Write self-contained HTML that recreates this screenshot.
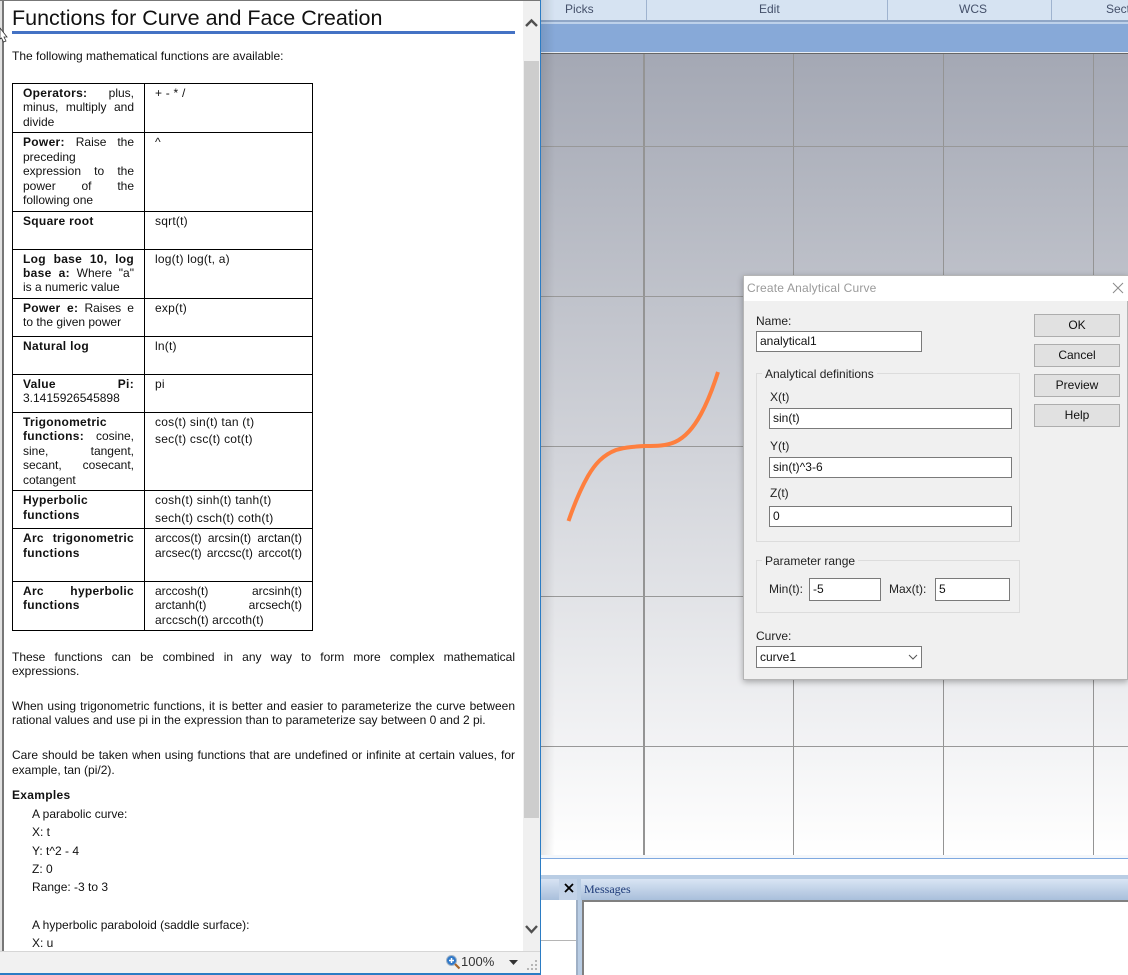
<!DOCTYPE html>
<html><head><meta charset="utf-8">
<style>
html,body{margin:0;padding:0;width:1128px;height:975px;overflow:hidden;background:#fff}
body{position:relative;font:12px/14px "Liberation Sans",sans-serif;color:#111}
div{position:absolute;box-sizing:border-box}
b{letter-spacing:.3px}
.t{white-space:nowrap;height:14px}
.j{white-space:normal;text-align:justify;text-align-last:justify;height:14px;overflow:hidden}
.c{left:23px;width:111px}
.r{left:155px;width:147px}
.r.t{letter-spacing:.22px}
.h{background:#000}
.in{background:#fff;border:1px solid #7a7a7a;padding:0 3px;line-height:19px;color:#111}
.btn{left:1034px;width:86px;height:23px;background:#e1e1e1;border:1px solid #adadad;text-align:center;line-height:21px}
.gb{border:1px solid #dcdcdc}
.gl{background:#f0f0f0;padding:0 3px;color:#222}
.gv{background:#949494}
.gh{left:541px;width:587px;height:1px;background:#989898}
</style></head><body>

<!-- application background -->
<div style="left:540px;top:0;width:588px;height:20px;background:#d6e3f2;color:#44506a;text-align:center">
  <div class="t" style="left:25px;top:2px">Picks</div>
  <div class="t" style="left:219px;top:2px">Edit</div>
  <div class="t" style="left:419px;top:2px">WCS</div>
  <div class="t" style="left:566px;top:2px">Sect</div>
  <div style="left:106px;top:0;width:1px;height:20px;background:#9fb3cf"></div>
  <div style="left:347px;top:0;width:1px;height:20px;background:#9fb3cf"></div>
  <div style="left:511px;top:0;width:1px;height:20px;background:#9fb3cf"></div>
</div>
<div style="left:540px;top:20px;width:588px;height:2px;background:#8fa6c6"></div>
<div style="left:540px;top:22px;width:588px;height:2px;background:#bdd1ea"></div>
<div style="left:540px;top:24px;width:588px;height:28px;background:#87a9d8"></div>
<div style="left:540px;top:52px;width:588px;height:1px;background:#e8eef6"></div>
<div style="left:540px;top:53px;width:588px;height:1px;background:#666"></div>

<!-- viewport -->
<div style="left:540px;top:54px;width:588px;height:801px;background:linear-gradient(#a4a8b4,#ffffff)"></div>
<div class="gv" style="left:643px;top:54px;width:2px;height:801px"></div>
<div class="gv" style="left:793px;top:54px;width:1px;height:801px"></div>
<div class="gv" style="left:943px;top:54px;width:1px;height:801px"></div>
<div class="gv" style="left:1093px;top:54px;width:1px;height:801px"></div>
<div class="gh" style="top:146px"></div>
<div class="gh" style="top:296px"></div>
<div class="gh" style="top:446px"></div>
<div class="gh" style="top:596px"></div>
<div class="gh" style="top:746px"></div>
<svg style="position:absolute;left:540px;top:340px" width="200" height="200" viewBox="540 340 200 200">
<path d="M568.500 521C574 505 580 490 588 476C595 464 603 455 616 450C626 447 636 446.500 645 446C656 446 666 446 675 442C686 437 694 427 701 414C708 401 713 388 718 372" fill="none" stroke="#fe7f3e" stroke-width="4"/>
</svg>
<div style="left:541px;top:0;width:14px;height:855px;background:linear-gradient(90deg,rgba(0,0,0,.10),rgba(0,0,0,0))"></div>

<!-- bottom panels -->
<div style="left:540px;top:855px;width:588px;height:3px;background:#f4f7fb"></div>
<div style="left:540px;top:858px;width:588px;height:1px;background:#7fa9e0"></div>
<div style="left:540px;top:859px;width:588px;height:16px;background:#fff"></div>
<div style="left:540px;top:875px;width:588px;height:100px;background:#b9cde4"></div>
<div style="left:541px;top:879px;width:36px;height:21px;background:linear-gradient(#d7e3f3,#a9bfdb)"></div>
<div style="left:559px;top:879px;width:18px;height:21px;background:#c3d3e8"></div>
<svg style="position:absolute;left:564px;top:883px" width="10" height="10"><path d="M1 1L9 9M9 1L1 9" stroke="#000" stroke-width="1.800"/></svg>
<div style="left:541px;top:900px;width:35px;height:75px;background:#fff"></div>
<div style="left:541px;top:940px;width:35px;height:1px;background:#b5b5b5"></div>
<div style="left:576px;top:900px;width:2px;height:75px;background:#9fb0c6"></div>
<div style="left:581px;top:879px;width:547px;height:21px;background:linear-gradient(#d9e5f4,#a9bfdb)"></div>
<div class="t" style="left:584px;top:882px;font:12px/14px 'Liberation Serif',serif;color:#1d3a78">Messages</div>
<div style="left:582px;top:900px;width:546px;height:75px;background:#fff;border-left:2px solid #808080;border-top:2px solid #808080"></div>

<!-- help window -->
<div style="left:0;top:0;width:541px;height:975px;background:#fff"></div>
<div style="left:0;top:0;width:2px;height:951px;background:#e2e2e2"></div>
<div style="left:2px;top:0;width:2px;height:951px;background:#777"></div>
<div style="left:0;top:0;width:541px;height:1px;background:#777"></div>
<div style="left:540px;top:0;width:1px;height:974px;background:#2b7cc4"></div>
<div style="left:0;top:973px;width:541px;height:2px;background:#2b7cc4"></div>
<!-- scrollbar -->
<div style="left:523px;top:1px;width:17px;height:950px;background:#f0f0f0"></div>
<div style="left:524px;top:61px;width:15px;height:757px;background:#cdcdcd"></div>
<svg style="position:absolute;left:524px;top:14px" width="15" height="16"><path d="M2 12L7.500 6.500L13 12" fill="none" stroke="#505050" stroke-width="2.400"/></svg>
<svg style="position:absolute;left:524px;top:923px" width="15" height="14"><path d="M2 3L7.500 9L13 3" fill="none" stroke="#505050" stroke-width="2.400"/></svg>
<!-- status -->
<div style="left:0;top:951px;width:540px;height:22px;background:#f1f1f1;border-top:1px solid #d6d6d6"></div>
<svg style="position:absolute;left:445px;top:954px" width="16" height="16"><circle cx="6.500" cy="6.500" r="5" fill="#2f78c8" stroke="#9fb2c6"/><path d="M4 6.500H9M6.500 4V9" stroke="#fff" stroke-width="1.500"/><path d="M10 10L14.500 14.500" stroke="#a8672c" stroke-width="2.200"/></svg>
<div class="t" style="left:461px;top:955px;font-size:13px;color:#333">100%</div>
<svg style="position:absolute;left:509px;top:960px" width="10" height="6"><path d="M0 0H9L4.500 5Z" fill="#333"/></svg>
<svg style="position:absolute;left:527px;top:960px" width="12" height="12" fill="#b5b5b5"><rect x="8" y="0" width="2" height="2"/><rect x="4" y="4" width="2" height="2"/><rect x="8" y="4" width="2" height="2"/><rect x="0" y="8" width="2" height="2"/><rect x="4" y="8" width="2" height="2"/><rect x="8" y="8" width="2" height="2"/></svg>
<!-- cursor -->
<svg style="position:absolute;left:0;top:26px" width="9" height="20"><path d="M0 2L7 11H4L6 15L3.500 16L1.500 12L0 13Z" fill="#fff" stroke="#333" stroke-width=".8"/></svg>

<!-- title -->
<div class="t" style="left:12px;top:5px;height:26px;font-size:21.500px;line-height:26px;color:#111">Functions for Curve and Face Creation</div>
<div style="left:12px;top:31px;width:503px;height:3px;background:#4472c4"></div>
<div class="t" style="left:12px;top:49px">The following mathematical functions are available:</div>

<!-- table lines -->
<div class="h" style="left:12px;top:83px;width:301px;height:1px"></div>
<div class="h" style="left:12px;top:132px;width:301px;height:1px"></div>
<div class="h" style="left:12px;top:211px;width:301px;height:1px"></div>
<div class="h" style="left:12px;top:249px;width:301px;height:1px"></div>
<div class="h" style="left:12px;top:298px;width:301px;height:1px"></div>
<div class="h" style="left:12px;top:336px;width:301px;height:1px"></div>
<div class="h" style="left:12px;top:374px;width:301px;height:1px"></div>
<div class="h" style="left:12px;top:412px;width:301px;height:1px"></div>
<div class="h" style="left:12px;top:490px;width:301px;height:1px"></div>
<div class="h" style="left:12px;top:528px;width:301px;height:1px"></div>
<div class="h" style="left:12px;top:581px;width:301px;height:1px"></div>
<div class="h" style="left:12px;top:630px;width:301px;height:1px"></div>
<div class="h" style="left:12px;top:83px;width:1px;height:548px"></div>
<div class="h" style="left:144px;top:83px;width:1px;height:548px"></div>
<div class="h" style="left:312px;top:83px;width:1px;height:548px"></div>

<div style="left:0;top:1px;width:540px;height:950px;overflow:visible">
<!-- table text -->
<div class="j c" style="top:85px"><b>Operators:</b> plus,</div>
<div class="j c" style="top:99px">minus, multiply and</div>
<div class="t c" style="top:114px">divide</div>
<div class="t r" style="top:85px">+ - * /</div>

<div class="j c" style="top:134px"><b>Power:</b> Raise the</div>
<div class="t c" style="top:149px">preceding</div>
<div class="j c" style="top:163px">expression to the</div>
<div class="j c" style="top:178px">power of the</div>
<div class="t c" style="top:192px">following one</div>
<div class="t r" style="top:134px">^</div>

<div class="t c" style="top:213px"><b>Square root</b></div>
<div class="t r" style="top:213px">sqrt(t)</div>

<div class="j c" style="top:251px"><b>Log base 10, log</b></div>
<div class="j c" style="top:265px"><b>base a:</b> Where "a"</div>
<div class="t c" style="top:279px">is a numeric value</div>
<div class="t r" style="top:251px">log(t) log(t, a)</div>

<div class="j c" style="top:300px"><b>Power e:</b> Raises e</div>
<div class="t c" style="top:314px">to the given power</div>
<div class="t r" style="top:300px">exp(t)</div>

<div class="t c" style="top:338px"><b>Natural log</b></div>
<div class="t r" style="top:338px">ln(t)</div>

<div class="j c" style="top:376px"><b>Value Pi:</b></div>
<div class="t c" style="top:390px">3.1415926545898</div>
<div class="t r" style="top:376px">pi</div>

<div class="t c" style="top:414px"><b>Trigonometric</b></div>
<div class="j c" style="top:428px"><b>functions:</b> cosine,</div>
<div class="j c" style="top:443px">sine, tangent,</div>
<div class="j c" style="top:457px">secant, cosecant,</div>
<div class="t c" style="top:472px">cotangent</div>
<div class="t r" style="top:414px">cos(t) sin(t) tan (t)</div>
<div class="t r" style="top:431px">sec(t) csc(t) cot(t)</div>

<div class="t c" style="top:492px"><b>Hyperbolic</b></div>
<div class="t c" style="top:507px"><b>functions</b></div>
<div class="t r" style="top:492px">cosh(t) sinh(t) tanh(t)</div>
<div class="t r" style="top:510px">sech(t) csch(t) coth(t)</div>

<div class="j c" style="top:530px"><b>Arc trigonometric</b></div>
<div class="t c" style="top:545px"><b>functions</b></div>
<div class="j r" style="top:530px">arccos(t) arcsin(t) arctan(t)</div>
<div class="j r" style="top:545px">arcsec(t) arccsc(t) arccot(t)</div>

<div class="j c" style="top:583px"><b>Arc hyperbolic</b></div>
<div class="t c" style="top:597px"><b>functions</b></div>
<div class="j r" style="top:583px">arccosh(t) arcsinh(t)</div>
<div class="j r" style="top:597px">arctanh(t) arcsech(t)</div>
<div class="t r" style="top:612px;letter-spacing:.1px">arccsch(t) arccoth(t)</div>

<!-- paragraphs -->
<div class="j" style="left:12px;width:503px;top:649px">These functions can be combined in any way to form more complex mathematical</div>
<div class="t" style="left:12px;top:663px">expressions.</div>
<div class="j" style="left:12px;width:503px;top:698px">When using trigonometric functions, it is better and easier to parameterize the curve between</div>
<div class="t" style="left:12px;top:712px">rational values and use pi in the expression than to parameterize say between 0 and 2 pi.</div>
<div class="j" style="left:12px;width:503px;top:747px">Care should be taken when using functions that are undefined or infinite at certain values, for</div>
<div class="t" style="left:12px;top:762px">example, tan (pi/2).</div>
<div class="t" style="left:12px;top:787px"><b>Examples</b></div>
<div class="t" style="left:32px;top:806px">A parabolic curve:</div>
<div class="t" style="left:32px;top:824px">X: t</div>
<div class="t" style="left:32px;top:843px">Y: t^2 - 4</div>
<div class="t" style="left:32px;top:861px">Z: 0</div>
<div class="t" style="left:32px;top:879px">Range: -3 to 3</div>
<div class="t" style="left:32px;top:917px">A hyperbolic paraboloid (saddle surface):</div>
<div class="t" style="left:32px;top:935px">X: u</div>
</div>

<!-- dialog -->
<div style="left:743px;top:275px;width:385px;height:405px;background:#f0f0f0;border:1px solid #b5b5b5;box-shadow:0 2px 6px rgba(0,0,0,.3)"></div>
<div style="left:744px;top:276px;width:384px;height:25px;background:#fff"></div>
<div class="t" style="left:747px;top:281px;color:#9a9a9a;letter-spacing:.18px">Create Analytical Curve</div>
<svg style="position:absolute;left:1112px;top:282px" width="12" height="12"><path d="M1 1L11 11M11 1L1 11" stroke="#8a8a8a" stroke-width="1"/></svg>

<div class="t" style="left:756px;top:314px;color:#222">Name:</div>
<div class="in t" style="left:756px;top:331px;width:166px;height:21px">analytical1</div>

<div class="gb" style="left:756px;top:373px;width:264px;height:169px"></div>
<div class="gl t" style="left:762px;top:367px">Analytical definitions</div>
<div class="t" style="left:770px;top:390px;color:#222">X(t)</div>
<div class="in t" style="left:769px;top:408px;width:243px;height:21px">sin(t)</div>
<div class="t" style="left:770px;top:439px;color:#222">Y(t)</div>
<div class="in t" style="left:769px;top:457px;width:243px;height:21px">sin(t)^3-6</div>
<div class="t" style="left:770px;top:486px;color:#222">Z(t)</div>
<div class="in t" style="left:769px;top:506px;width:243px;height:21px">0</div>

<div class="gb" style="left:756px;top:560px;width:264px;height:53px"></div>
<div class="gl t" style="left:762px;top:554px">Parameter range</div>
<div class="t" style="left:769px;top:582px;color:#222">Min(t):</div>
<div class="in t" style="left:809px;top:578px;width:72px;height:23px;line-height:21px">-5</div>
<div class="t" style="left:889px;top:582px;color:#222">Max(t):</div>
<div class="in t" style="left:935px;top:578px;width:75px;height:23px;line-height:21px">5</div>

<div class="t" style="left:756px;top:629px;color:#222">Curve:</div>
<div class="in t" style="left:756px;top:646px;width:166px;height:22px;line-height:20px">curve1</div>
<svg style="position:absolute;left:908px;top:654px" width="10" height="7"><path d="M1 1L5 5L9 1" fill="none" stroke="#555" stroke-width="1"/></svg>

<div class="btn" style="top:314px">OK</div>
<div class="btn" style="top:344px">Cancel</div>
<div class="btn" style="top:374px">Preview</div>
<div class="btn" style="top:404px">Help</div>
</body></html>
